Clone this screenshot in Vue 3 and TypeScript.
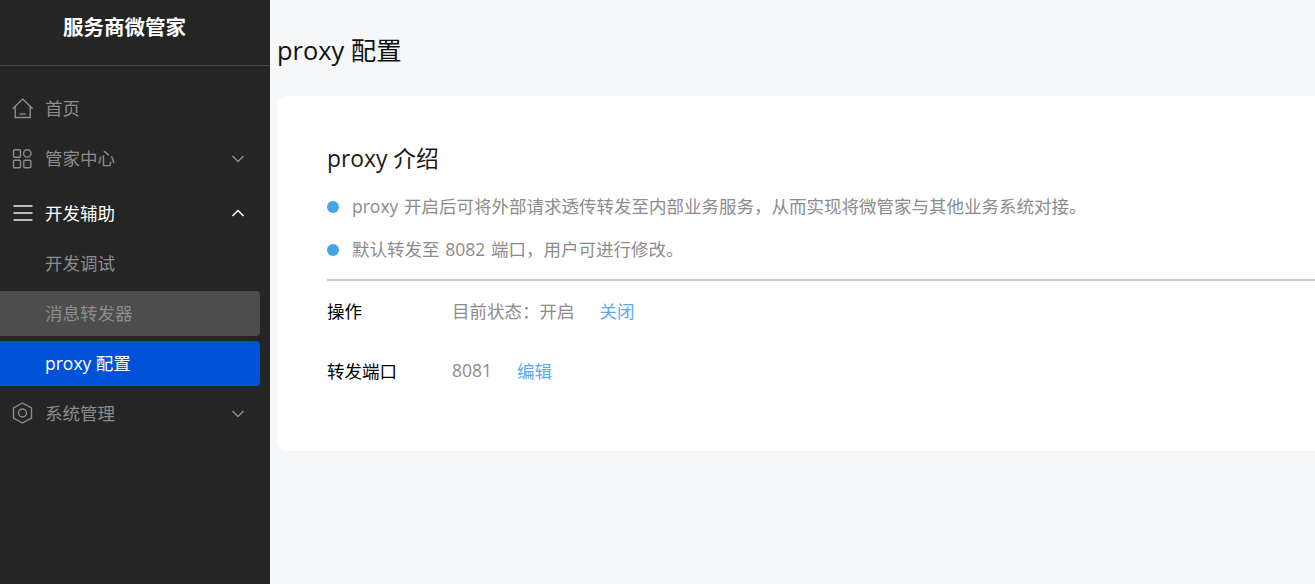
<template>
  <div class="layout">
    <aside class="sidebar">
      <div class="logo">服务商微管家</div>
      <nav class="menu">
        <div v-for="item in menus" :key="item.title" class="group">
          <div class="menu-item" :class="[{ open: item.open }, item.cls]">
            <svg class="icon" viewBox="0 0 22 22" fill="none" stroke="currentColor" stroke-width="1.4">
              <path v-for="d in item.paths" :key="d" :d="d" />
              <circle v-for="c in item.circles" :key="c[0]" :cx="c[0]" :cy="c[1]" :r="c[2]" />
            </svg>
            <span class="menu-title">{{ item.title }}</span>
            <svg v-if="item.arrow" class="arrow" viewBox="0 0 14 14" fill="none" stroke="currentColor" stroke-width="1.5">
              <path :d="item.open ? 'M1.5 10L7 4.5l5.5 5.5' : 'M1.5 5L7 10.5 12.5 5'" />
            </svg>
          </div>
          <div v-if="item.children" class="submenu">
            <div
              v-for="sub in item.children"
              :key="sub.title"
              class="sub-item"
              :class="sub.state"
            >
              {{ sub.title }}
            </div>
          </div>
        </div>
      </nav>
    </aside>

    <main class="main">
      <h1 class="page-title">proxy 配置</h1>
      <section class="card">
        <h2 class="card-title">proxy 介绍</h2>
        <ul class="intro">
          <li v-for="line in intro" :key="line">
            <span class="dot"></span>
            <span class="text">{{ line }}</span>
          </li>
        </ul>
        <div class="divider"></div>
        <div class="row">
          <span class="label text">操作</span>
          <span class="value text">目前状态：开启</span>
          <a class="link text">关闭</a>
        </div>
        <div class="row">
          <span class="label text">转发端口</span>
          <span class="value text">8081</span>
          <a class="link text">编辑</a>
        </div>
      </section>
    </main>
  </div>
</template>

<script setup lang="ts">
interface SubItem {
  title: string;
  state?: string;
}

interface MenuItem {
  title: string;
  paths: string[];
  circles?: number[][];
  arrow?: boolean;
  open?: boolean;
  cls?: string;
  children?: SubItem[];
}

const menus: MenuItem[] = [
  {
    title: '首页',
    paths: ['M0.8 11.8L10.7 2l9.9 9.8', 'M3.2 9.5v11h15v-11', 'M7.5 17h6'],
  },
  {
    title: '管家中心',
    arrow: true,
    cls: 'gap-after',
    paths: [
      'M2.5 2.7h5a1 1 0 0 1 1 1v5.5a1 1 0 0 1-1 1h-5a1 1 0 0 1-1-1v-5.5a1 1 0 0 1 1-1z',
      'M2.5 13.3h5a1 1 0 0 1 1 1v5.5a1 1 0 0 1-1 1h-5a1 1 0 0 1-1-1v-5.5a1 1 0 0 1 1-1z',
      'M12.8 13.3h5a1 1 0 0 1 1 1v5.5a1 1 0 0 1-1 1h-5a1 1 0 0 1-1-1v-5.5a1 1 0 0 1 1-1z',
    ],
    circles: [[15.3, 6.4, 3.7]],
  },
  {
    title: '开发辅助',
    arrow: true,
    open: true,
    paths: ['M1.5 4h19', 'M1.5 11h19', 'M1.5 18h19'],
    children: [
      { title: '开发调试' },
      { title: '消息转发器', state: 'hover' },
      { title: 'proxy 配置', state: 'active' },
    ],
  },
  {
    title: '系统管理',
    arrow: true,
    circles: [[10.5, 11, 4]],
    paths: ['M10.5 1L19.5 6v10L10.5 21 1.5 16V6z'],
  },
];

const intro = [
  'proxy 开启后可将外部请求透传转发至内部业务服务，从而实现将微管家与其他业务系统对接。',
  '默认转发至 8082 端口，用户可进行修改。',
];
</script>

<style>
html,
body {
  margin: 0;
  height: 100%;
  overflow: hidden;
}
</style>

<style scoped>
.layout {
  display: flex;
  width: 1315px;
  height: 584px;
  overflow: hidden;
  background: #f6f7f9;
  font-family: "Open Sans", "Noto Sans CJK SC", sans-serif;
}

.sidebar {
  flex: 0 0 270px;
  background: #252525;
  color: #8c8c8c;
}

.logo {
  height: 65px;
  padding-right: 21px;
  border-bottom: 1px solid #4a4a4a;
  color: #fff;
  font-size: 20.5px;
  font-weight: 700;
  line-height: 55px;
  text-align: center;
}

.menu {
  padding-top: 17px;
}

.menu-item {
  display: flex;
  align-items: center;
  height: 50px;
  padding: 0 25px 0 12px;
  font-size: 17.5px;
}

.menu-item.gap-after {
  margin-bottom: 5px;
}

.menu-item.open {
  color: #fff;
}

.icon {
  width: 22px;
  height: 22px;
  flex: none;
}

.menu-title {
  flex: 1;
  margin-left: 11px;
  padding-bottom: 2px;
}

.arrow {
  width: 14px;
  height: 14px;
  flex: none;
}

.submenu {
  display: flex;
  flex-direction: column;
  gap: 5px;
  padding-top: 3px;
  margin-bottom: 2px;
}

.sub-item {
  height: 45px;
  width: 260px;
  padding-left: 45px;
  box-sizing: border-box;
  border-radius: 0 4px 4px 0;
  font-size: 17.5px;
  line-height: 44px;
}

.sub-item.hover {
  background: #4d4d4d;
}

.sub-item.active {
  background: #0052d9;
  color: #fff;
}

.main {
  flex: 1;
  min-width: 0;
  padding-left: 7px;
}

.page-title {
  margin: 0;
  padding-top: 33px;
  height: 96px;
  box-sizing: border-box;
  color: #111;
  font-size: 25.4px;
  font-weight: 400;
  line-height: 34px;
}

.card {
  width: 1200px;
  height: 355px;
  box-sizing: border-box;
  padding: 45px 50px 0;
  border-radius: 12px;
  background: #fff;
}

.card-title {
  margin: 0;
  color: #1a1a1a;
  font-size: 22.8px;
  font-weight: 400;
  line-height: 36px;
}

.intro {
  margin: 8px 0 0;
  padding: 0;
  list-style: none;
}

.intro li {
  display: flex;
  align-items: center;
  height: 43px;
  color: #8c8c8c;
  font-size: 17.5px;
  word-spacing: 1.2px;
}

.text {
  padding-bottom: 2px;
}

.dot {
  width: 12px;
  height: 12px;
  margin-right: 13px;
  border-radius: 50%;
  background: #44a5ec;
}

.divider {
  height: 2px;
  margin-top: 8px;
  background: #cbcbcb;
}

.row {
  display: flex;
  align-items: center;
  height: 60px;
  font-size: 17.5px;
}

.label {
  width: 125px;
  color: #000;
}

.value {
  color: #8c8c8c;
}

.link {
  margin-left: 25px;
  color: #5aa9f0;
}
</style>
